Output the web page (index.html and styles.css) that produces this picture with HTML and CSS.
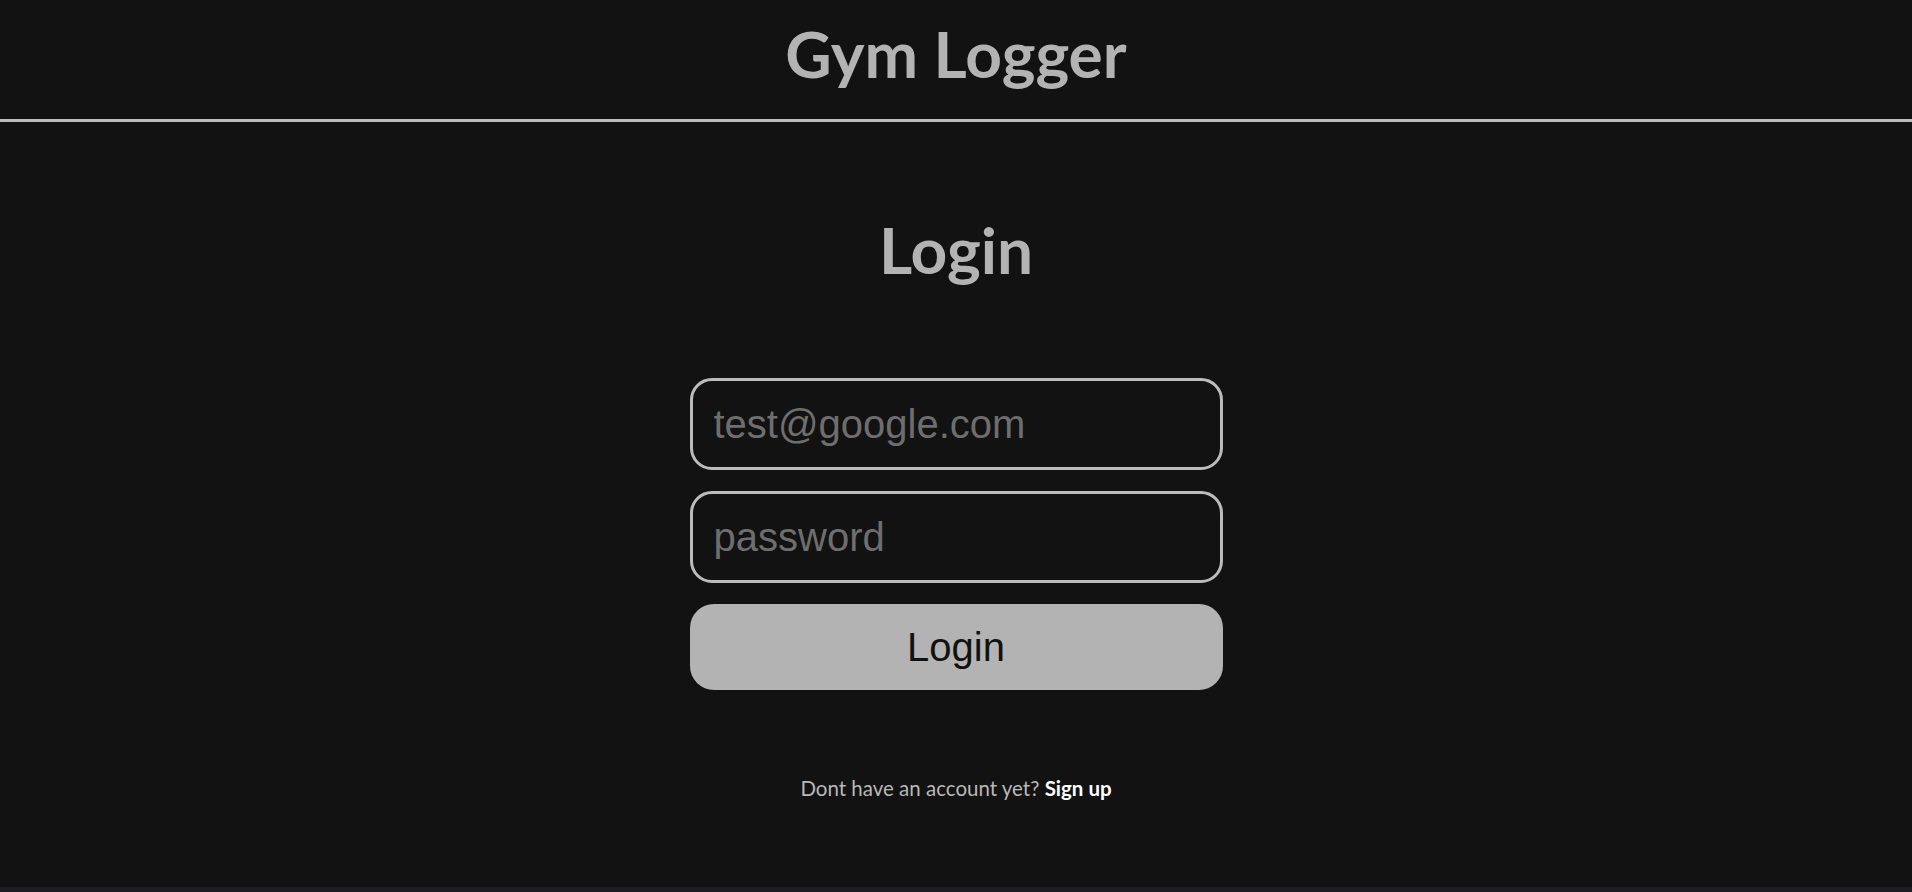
FILE: index.html
```html
<!DOCTYPE html>
<html lang="en">
<head>
<meta charset="utf-8">
<title>Gym Logger</title>
<link rel="stylesheet" href="styles.css">
</head>
<body>
<div class="page">
  <header class="site-header">
    <h1 class="site-title">Gym Logger</h1>
  </header>
  <main class="auth">
    <h2 class="auth-title">Login</h2>
    <form class="auth-form">
      <input class="auth-input" type="email" placeholder="test@google.com">
      <input class="auth-input" type="password" placeholder="password">
      <button class="auth-button" type="button">Login</button>
    </form>
    <p class="auth-footer">Dont have an account yet? <a class="auth-link" href="#">Sign up</a></p>
  </main>
</div>
</body>
</html>
```
FILE: styles.css
```css
html {
  background: #1d1d23;
}
body {
  margin: 0;
  font-family: Lato, "Noto Sans", sans-serif;
}
.page {
  background: #121212;
  height: 887px;
  overflow: hidden;
}
.site-header {
  height: 119px;
  border-bottom: 3px solid #bcbcbc;
  display: flex;
  justify-content: center;
}
.site-title {
  margin: 0;
  padding-top: 14px;
  font-size: 64px;
  line-height: 80px;
  font-weight: 700;
  color: #b3b3b3;
}
.auth {
  display: flex;
  flex-direction: column;
  align-items: center;
}
.auth-title {
  margin: 0;
  padding-top: 88px;
  font-size: 64px;
  line-height: 80px;
  font-weight: 700;
  color: #b3b3b3;
}
.auth-form {
  margin-top: 88px;
  width: 533px;
  display: flex;
  flex-direction: column;
  gap: 21px;
}
.auth-input {
  box-sizing: border-box;
  width: 100%;
  height: 92px;
  padding: 0 21px;
  border: 3px solid #bcbcbc;
  border-radius: 22px;
  background: #121212;
  font-family: "Liberation Sans", Arial, sans-serif;
  font-size: 40px;
  color: #ddd;
  outline: none;
}
.auth-input::placeholder {
  color: #6e6e6e;
}
.auth-button {
  box-sizing: border-box;
  width: 100%;
  height: 86px;
  border: none;
  border-radius: 24px;
  background: #b3b3b3;
  font-family: "Liberation Sans", Arial, sans-serif;
  font-size: 40px;
  color: #111;
}
.auth-footer {
  margin: 86px 0 0;
  font-size: 20.5px;
  color: #b8b8b8;
}
.auth-link {
  color: #fff;
  font-weight: 700;
  text-decoration: none;
}
```
